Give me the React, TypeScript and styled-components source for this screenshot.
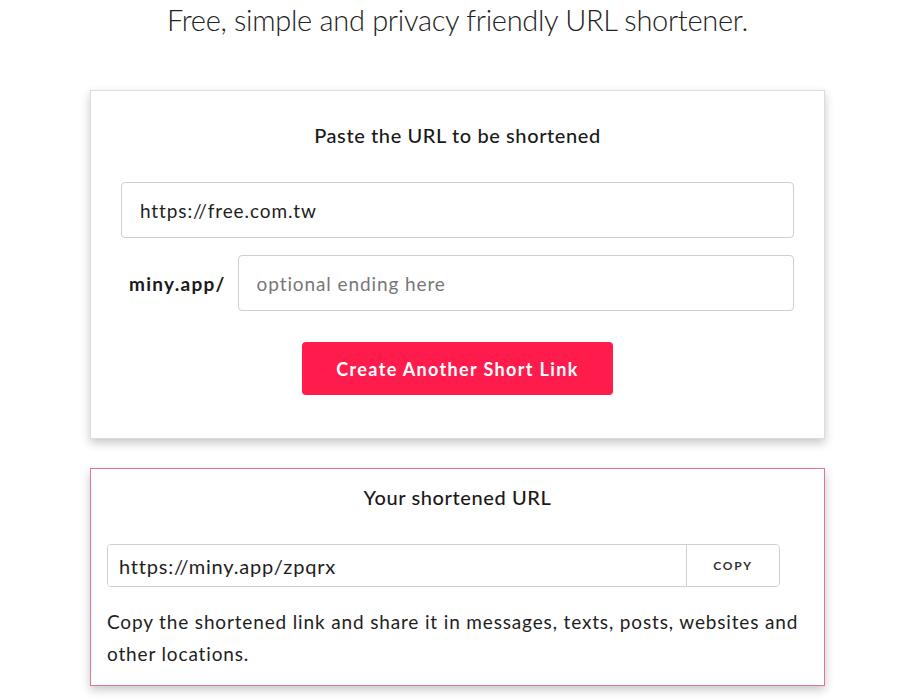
import { FC } from 'react';
import styled, { createGlobalStyle } from 'styled-components';

const GlobalStyle = createGlobalStyle`
  body {
    margin: 0;
    background: #fff;
    font-family: Lato, 'Noto Sans', sans-serif;
    color: #1c1c1c;
  }
`;

const Page = styled.div`
  display: flex;
  flex-direction: column;
  align-items: center;
  padding-bottom: 40px;
`;

const Tagline = styled.h1`
  margin: 0 0 50px;
  font-size: 29px;
  line-height: 40px;
  font-weight: 300;
  letter-spacing: -0.3px;
  color: #222;
  text-align: center;
`;

const Card = styled.div<{ accent?: boolean }>`
  box-sizing: border-box;
  width: 735px;
  background: #fff;
  border: 1px solid ${({ accent }) => (accent ? '#e27592' : '#dcdcdc')};
  box-shadow: 0 4px 9px rgba(0, 0, 0, 0.22);
  display: flex;
  flex-direction: column;
`;

const FormCard = styled(Card)`
  padding: 32px 30px 43px;
  align-items: stretch;
`;

const ResultCard = styled(Card)`
  margin-top: 29px;
  padding: 16px 16px 15px;
`;

const Heading = styled.h2`
  margin: 0;
  font-size: 20px;
  line-height: 24px;
  font-weight: 500;
  letter-spacing: 0.6px;
  text-align: center;
  color: #1a1a1a;
`;

const TextField = styled.input`
  box-sizing: border-box;
  flex: 1;
  min-width: 0;
  height: 56px;
  padding: 0 18px;
  border: 1px solid #cfcfcf;
  border-radius: 4px;
  font-family: inherit;
  font-size: 19px;
  letter-spacing: 0.9px;
  color: #1e1e1e;
  outline: none;
  &::placeholder {
    color: #777;
  }
`;

const UrlRow = styled.div`
  display: flex;
  margin-top: 35px;
`;

const EndingRow = styled.div`
  display: flex;
  align-items: center;
  gap: 12px;
  margin-top: 17px;
`;

const Prefix = styled.label`
  padding-left: 8px;
  font-size: 19px;
  font-weight: 700;
  letter-spacing: 1.3px;
  color: #1a1a1a;
`;

const SubmitButton = styled.button`
  align-self: center;
  margin-top: 31px;
  width: 311px;
  height: 53px;
  border: none;
  border-radius: 4px;
  background: #ff1b4c;
  color: #fff;
  font-family: inherit;
  font-size: 18px;
  font-weight: 700;
  letter-spacing: 1.35px;
  cursor: pointer;
`;

const CopyGroup = styled.div`
  display: flex;
  width: 673px;
  height: 43px;
  margin-top: 35px;
  border: 1px solid #cfcfcf;
  border-radius: 4px;
  box-sizing: border-box;
  overflow: hidden;
`;

const CopyInput = styled.input`
  flex: 1;
  min-width: 0;
  border: none;
  padding: 0 11px;
  font-family: inherit;
  font-size: 20px;
  letter-spacing: 0.8px;
  color: #1e1e1e;
  outline: none;
`;

const CopyButton = styled.button`
  width: 93px;
  border: none;
  border-left: 1px solid #cfcfcf;
  background: #fff;
  font-family: inherit;
  font-size: 12px;
  font-weight: 700;
  letter-spacing: 1.8px;
  color: #333;
  cursor: pointer;
`;

const Note = styled.p`
  margin: 19px 0 0;
  font-size: 19px;
  line-height: 32px;
  letter-spacing: 0.85px;
  color: #1e1e1e;
`;

const App: FC = () => (
  <Page>
    <GlobalStyle />
    <Tagline>Free, simple and privacy friendly URL shortener.</Tagline>
    <FormCard>
      <Heading>Paste the URL to be shortened</Heading>
      <UrlRow>
        <TextField defaultValue="https://free.com.tw" />
      </UrlRow>
      <EndingRow>
        <Prefix>miny.app/</Prefix>
        <TextField placeholder="optional ending here" />
      </EndingRow>
      <SubmitButton>Create Another Short Link</SubmitButton>
    </FormCard>
    <ResultCard accent>
      <Heading>Your shortened URL</Heading>
      <CopyGroup>
        <CopyInput readOnly defaultValue="https://miny.app/zpqrx" />
        <CopyButton>COPY</CopyButton>
      </CopyGroup>
      <Note>
        Copy the shortened link and share it in messages, texts, posts, websites and other
        locations.
      </Note>
    </ResultCard>
  </Page>
);

export default App;
